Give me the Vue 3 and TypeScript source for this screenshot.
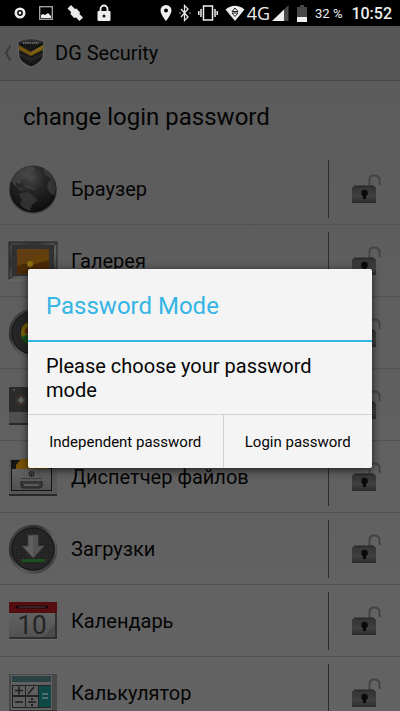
<script setup lang="ts">
import { ref } from 'vue'

type IconName = 'globe' | 'gallery' | 'chrome' | 'camera' | 'files' | 'download' | 'calendar' | 'calculator'

interface AppEntry {
  name: string
  icon: IconName
}

const apps: AppEntry[] = [
  { name: 'Браузер', icon: 'globe' },
  { name: 'Галерея', icon: 'gallery' },
  { name: '', icon: 'chrome' },
  { name: '', icon: 'camera' },
  { name: 'Диспетчер файлов', icon: 'files' },
  { name: 'Загрузки', icon: 'download' },
  { name: 'Календарь', icon: 'calendar' },
  { name: 'Калькулятор', icon: 'calculator' },
]

const mode = ref<'independent' | 'login' | null>(null)
</script>

<template>
  <div class="screen">
    <svg class="defs" width="0" height="0" aria-hidden="true">
      <defs>
        <radialGradient id="ball" cx=".45" cy=".25" r=".75">
          <stop offset="0" stop-color="#484848" /><stop offset=".4" stop-color="#262626" /><stop offset="1" stop-color="#0c0c0c" />
        </radialGradient>
        <linearGradient id="metal" x1="0" y1="0" x2="1" y2="1">
          <stop offset="0" stop-color="#4a4a4a" /><stop offset=".3" stop-color="#303030" /><stop offset=".6" stop-color="#606060" /><stop offset="1" stop-color="#303030" />
        </linearGradient>
        <linearGradient id="sunset" x1="0" y1="0" x2="0" y2="1">
          <stop offset="0" stop-color="#5c3d0c" /><stop offset=".65" stop-color="#6b420a" /><stop offset="1" stop-color="#442106" />
        </linearGradient>
        <linearGradient id="lockBody" x1="0" y1="0" x2="0" y2="1">
          <stop offset="0" stop-color="#343434" /><stop offset=".6" stop-color="#404040" /><stop offset="1" stop-color="#2c2c2c" />
        </linearGradient>
        <linearGradient id="sheet" x1="0" y1="0" x2="0" y2="1">
          <stop offset="0" stop-color="#626262" /><stop offset="1" stop-color="#525252" />
        </linearGradient>
        <pattern id="mesh" width="2" height="2" patternUnits="userSpaceOnUse">
          <rect width="2" height="2" fill="#282828" /><rect width="1" height="1" fill="#1c1c1c" />
        </pattern>
      </defs>
    </svg>

    <header class="status">
      <div class="group left">
        <svg width="12" height="14" viewBox="0 0 12 14"><circle cx="6" cy="7" r="4.2" fill="none" stroke="#eee" stroke-width="2.6" /><circle cx="6" cy="7" r="1.4" fill="#eee" /></svg>
        <svg width="14" height="14" viewBox="0 0 14 14"><rect x=".7" y=".7" width="12.6" height="12.6" fill="none" stroke="#aaa" stroke-width="1.3" /><path d="M2 12V9l2-1 2 1 3-2 3 3v2z" fill="#eee" /></svg>
        <svg width="18" height="18" viewBox="0 0 18 18" fill="#e8e8e8"><path d="M1.500 4.500L5 1l4 4 1.500-.5 3.500 4-.5 1.500 3.500 3.500-3.500 3.500-3.500-3.500-2 .5-3.500-4 .5-2z" /></svg>
        <svg width="14" height="18" viewBox="0 0 14 18"><path d="M3.500 8V5a3.500 3.500 0 0 1 7 0v3" fill="none" stroke="#eee" stroke-width="1.800" /><rect x=".5" y="7" width="13" height="10" rx="1" fill="#eee" /><circle cx="7" cy="12" r="1.500" fill="#111" /></svg>
      </div>
      <div class="group right">
        <svg width="12" height="18" viewBox="0 0 12 18"><path d="M6 1a5.500 5.500 0 0 0-5.500 5.500C.5 10.500 6 17 6 17s5.500-6.500 5.500-10.500A5.500 5.500 0 0 0 6 1zm0 3.500a2 2 0 1 1 0 4 2 2 0 0 1 0-4z" fill="#eee" /></svg>
        <svg width="12" height="18" viewBox="0 0 12 18" fill="none" stroke="#e4e4e4" stroke-width="1.300"><path d="M2 5l7 8-3.500 3.500v-15L9 5l-7 8" /><path d="M1 8.500v1M11 8.500v1" /></svg>
        <svg width="20" height="18" viewBox="0 0 20 18" fill="none" stroke="#eee" stroke-width="1.500"><rect x="5.500" y="2" width="9" height="14" /><path d="M3 5v8M.8 7v4M17 5v8M19.200 7v4" /></svg>
        <svg width="20" height="18" viewBox="0 0 20 18"><path d="M.5 5.500Q10-2 19.500 5.500L10 17z" fill="#eee" /><path d="M10 4l3 3.500H7zM7 9h6l-3 3.500z" fill="#eee" stroke="#222" stroke-width="1" /></svg>
        <span class="net">4G</span>
        <svg width="17" height="17" viewBox="0 0 17 17"><path d="M16.500 0v16H1z" fill="#4b4b4b" /><path d="M12 4.600V16H0z" fill="#eee" /></svg>
        <svg width="12" height="17" viewBox="0 0 12 17"><path d="M4 0h4v2h3v15H1V2h3z" fill="#484848" /><path d="M1 12h10v5H1z" fill="#eee" /></svg>
        <span class="percent">32 %</span>
        <time class="clock">10:52</time>
      </div>
    </header>

    <div class="content">
      <nav class="appbar">
        <a class="back" href="#" aria-label="Back">
          <svg width="9" height="18" viewBox="0 0 9 18"><path d="M7.500 1.500L3 9l4.500 7.500" fill="none" stroke="#3b3b3b" stroke-width="2" /></svg>
          <svg width="30" height="32" viewBox="0 0 30 32">
            <path d="M15 1l14 3-1 16q-2 7-13 11Q4 27 2 20L1 4z" fill="#626262" />
            <path d="M15 2.500l12.500 2.500-1 15q-2 6-11.500 9.500Q5.500 26 3.500 20L2.500 5z" fill="#171717" />
            <path d="M3 4.500Q15 0 27 4.500v2Q15 3 3 6.500z" fill="#303030" />
            <path d="M7 6h16" stroke="#686868" stroke-width="2" stroke-dasharray="1.500 .7" />
            <path d="M2.700 8L15 15l12.300-7-.4 5L15 19 3.200 13z" fill="#70540e" />
            <path d="M15 15l12.300-7-.4 3L15 17.500z" fill="#84661c" />
            <path d="M4 16l11 5 11-5v3l-11 6-11-6z" fill="#232323" />
          </svg>
        </a>
        <span class="app-title">DG Security</span>
      </nav>

      <h1 class="heading">change login password</h1>

      <ul class="apps">
        <li v-for="app in apps" :key="app.icon" class="row">
          <svg class="icon" width="50" height="50" viewBox="0 0 50 50" aria-hidden="true">
            <g v-if="app.icon === 'globe'">
              <ellipse cx="25" cy="27" rx="24" ry="23" fill="#484848" />
              <circle cx="25" cy="25" r="23.500" fill="url(#ball)" />
              <path d="M3 17Q9 4 23 2l5 3-5 4-4 5-5 1-2 5-4-1 1 4 5 1 2 3-5-2-5-4z" fill="#4c4c4c" opacity=".6" />
              <path d="M11 30l8-2 9 6 1 3-5 4-2 6q-7-2-10-7l2-4z" fill="#3c3c3c" opacity=".7" />
              <path d="M35 4l6 4 5 7 1 4-4-3-3-4-3-1zM40 18l5-3 3 7-1 9-4-1-4-6z" fill="#4c4c4c" opacity=".5" />
              <path d="M17 22l6 2 4 2" stroke="#484848" stroke-width="1" fill="none" />
            </g>
            <g v-else-if="app.icon === 'gallery'">
              <path d="M1 6h48v38H1z" fill="url(#metal)" />
              <path d="M1 6h48v38H1zM1 6l6 6M49 6l-6 6M1 44l6-6M49 44l-6-6" stroke="#222" fill="none" />
              <rect x="4" y="9" width="42" height="31" fill="#303030" />
              <rect x="9" y="13" width="32" height="25" fill="url(#sunset)" />
              <path d="M9 29l13-4 6-7q6-4 13-4V13H9z" fill="#603e12" />
              <path d="M9 30q8-4 15-1l17-5v14H9z" fill="#4a2a08" />
              <circle cx="22" cy="28" r="3" fill="#8a6c10" />
              <path d="M1 43h48v2H1z" fill="#666" />
            </g>
            <g v-else-if="app.icon === 'chrome' || app.icon === 'download'">
              <circle cx="25" cy="26" r="24" fill="#484848" />
              <circle cx="25" cy="25" r="23" fill="url(#mesh)" stroke="url(#metal)" stroke-width="2.500" />
              <circle cx="25" cy="25" r="21" fill="none" stroke="#181818" />
              <template v-if="app.icon === 'download'">
                <path d="M20 11h10v11h6L25 34 14 22h6z" fill="#606060" stroke="#3c3c3c" />
                <path d="M25 11h5v11h6L25 34z" fill="#535353" />
                <rect x="14" y="35" width="23" height="3" fill="#1c501c" />
              </template>
              <template v-else>
                <circle cx="25" cy="25" r="12" fill="#766208" />
                <path d="M25 25l-6-10.400q5-3 10-1z" fill="#5c1710" />
                <path d="M13.500 29l7-3 4 11q-9 0-11-8z" fill="#174d1c" />
                <path d="M17 21l4-3v9l-4-2z" fill="#5c2810" />
              </template>
            </g>
            <g v-else-if="app.icon === 'camera'">
              <rect x="1" y="7" width="48" height="37" fill="#505050" />
              <rect x="1" y="7" width="48" height="25" fill="#242424" />
              <path d="M1 7h18v25H1z" fill="#2b2b2b" />
              <circle cx="13" cy="20" r="5" fill="#303030" stroke="#4a2d20" />
              <circle cx="13" cy="20" r="2.500" fill="#6c6c6c" />
              <path d="M13 16v8M9 20h8" stroke="#5a5a5a" />
              <circle cx="6" cy="10" r="1" fill="#5a5a5a" />
              <path d="M1 43h48v2H1z" fill="#2a2a2a" />
            </g>
            <g v-else-if="app.icon === 'files'">
              <path d="M1 7h48v37H1z" fill="#575757" />
              <path d="M3 8h41v31H3z" fill="#151515" />
              <path d="M8 17v-4l5-6h28v10z" fill="#765306" />
              <path d="M4 17h39v21H4z" fill="url(#sheet)" />
              <circle cx="23.500" cy="22" r="2.500" fill="#4a4a4a" stroke="#202020" />
              <path d="M23.500 21v3" stroke="#222" />
              <path d="M13 27h21v7q0 2-2 2H15q-2 0-2-2z" fill="#373737" stroke="#222" />
              <path d="M12 27h23v2H12zM16 32h15v2H16z" fill="#5a5a5a" />
              <path d="M1 42h48v2H1z" fill="#282828" />
            </g>
            <g v-else-if="app.icon === 'calendar'">
              <rect x="1" y="6" width="48" height="38" fill="#303030" />
              <rect x="1" y="17" width="46" height="24" fill="url(#sheet)" />
              <path d="M47 28v13H36z" fill="#4c4c4c" />
              <rect x="1" y="6" width="48" height="11" fill="#560d10" />
              <path d="M9 11h30" stroke="#220709" stroke-width="3" stroke-linecap="round" />
              <path d="M11 11h26" stroke="#4d3a3a" />
              <text x="24" y="38" text-anchor="middle" class="day">10</text>
              <path d="M1 43h48v1H1z" fill="#6c6c6c" />
            </g>
            <g v-else>
              <rect x="1" y="6" width="48" height="40" fill="#484848" />
              <path d="M3 7h41v36H3z" fill="#606060" />
              <rect x="4" y="8" width="39" height="6" fill="#2a4243" />
              <path d="M4 17h39v23H4z" fill="#222" />
              <path d="M5 18h12v9H5zM18 18h12v9H18zM5 29h12v10H5zM18 29h12v10H18z" fill="#5e5e5e" />
              <rect x="31" y="18" width="12" height="21" fill="#0e4948" />
              <path d="M7 22.500h8M11 18.500v8M20 26l6-7M7 34h8M20 34h8" stroke="#1d1d1d" stroke-width="1.500" />
              <path d="M34 26h6M34 30h6" stroke="#6c7b7b" stroke-width="1.500" />
              <path d="M23 30h2v2h-2zM23 36h2v2h-2z" fill="#1d1d1d" />
              <path d="M1 42h48v3H1z" fill="#333" />
            </g>
          </svg>
          <span class="name">{{ app.name }}</span>
          <span class="lock-cell">
            <svg width="30" height="30" viewBox="0 0 30 30" aria-hidden="true">
              <path d="M17.500 12V5.500Q17.500 1.500 22.500 1.500T27.500 6v5" fill="none" stroke="#444" stroke-width="2" />
              <path d="M2 11.500h20l1 3H1z" fill="#292929" />
              <rect x="0" y="13" width="24" height="16" rx="1" fill="url(#lockBody)" />
              <path d="M0 28.500h24" stroke="#2c2c2c" />
              <circle cx="12.500" cy="19" r="3.300" fill="#0a0a0a" /><path d="M11.300 20h2.400l.5 5h-3.400z" fill="#0a0a0a" />
            </svg>
          </span>
        </li>
      </ul>

      <div class="overlay">
        <section class="dialog" role="dialog" aria-labelledby="dialog-title">
          <h2 id="dialog-title" class="dialog-title">Password Mode</h2>
          <p class="message">Please choose your password mode</p>
          <div class="actions">
            <button type="button" @click="mode = 'independent'">Independent password</button>
            <button type="button" @click="mode = 'login'">Login password</button>
          </div>
        </section>
      </div>
    </div>
  </div>
</template>

<style>
body {
  background: #5f5f5f;
}
</style>

<style scoped>
.screen {
  display: flex;
  flex-direction: column;
  height: 100vh;
  overflow: hidden;
  font-family: Roboto, "Noto Sans", sans-serif;
  color: #050505;
  background: linear-gradient(#5b5b5b, #636363);
}
.defs {
  position: absolute;
}
.status {
  flex: none;
  display: flex;
  justify-content: space-between;
  height: 26px;
  padding: 0 8px 0 14px;
  background: #000;
  color: #eee;
}
.group {
  display: flex;
  align-items: center;
  white-space: nowrap;
}
.left {
  gap: 13px;
}
.right {
  gap: 7px;
}
.net {
  font: 18px "Open Sans", sans-serif;
  margin: 0 -5px;
}
.percent {
  font-size: 13px;
  margin-right: 2px;
}
.clock {
  font-size: 16px;
  font-weight: 500;
}
.content {
  position: relative;
  flex: 1;
  min-height: 0;
  overflow: hidden;
}
.appbar {
  display: flex;
  align-items: center;
  gap: 9px;
  height: 55px;
  box-sizing: border-box;
  padding-left: 3px;
  background: #565656;
  border-bottom: 1px solid #484848;
}
.back {
  display: flex;
  align-items: center;
  gap: 4px;
}
.app-title {
  font-size: 20px;
}
.heading {
  margin: 0;
  padding: 0 23px;
  font-size: 24px;
  font-weight: 400;
  line-height: 72px;
}
.apps {
  list-style: none;
  margin: 0;
  padding: 0;
}
.row {
  display: flex;
  align-items: center;
  height: 72px;
  box-sizing: border-box;
  padding-left: 8px;
  border-bottom: 1px solid #525252;
}
.icon {
  flex: none;
}
.name {
  flex: 1;
  padding-left: 13px;
  font-size: 20px;
}
.lock-cell {
  display: flex;
  align-items: center;
  height: 58px;
  box-sizing: border-box;
  width: 72px;
  padding-left: 23px;
  border-left: 1px solid #2c2c2c;
}
.day {
  font: 26px Roboto, sans-serif;
  fill: #242424;
}
.overlay {
  position: absolute;
  inset: 0;
  display: flex;
  align-items: center;
  padding: 0 28px;
}
.dialog {
  flex: 1;
  background: #f4f4f4;
  border-radius: 2px;
  box-shadow: 0 2px 8px rgba(0, 0, 0, 0.7);
}
.dialog-title {
  margin: 0;
  padding: 3px 18px 0;
  font-size: 24px;
  font-weight: 400;
  line-height: 68px;
  color: #33b5e5;
  border-bottom: 2px solid #33b5e5;
}
.message {
  margin: 0;
  padding: 12px 18px;
  font-size: 20px;
  line-height: 24px;
}
.actions {
  display: flex;
  border-top: 1px solid #d2d2d2;
}
.actions button {
  flex: 1 1 auto;
  height: 53px;
  padding: 0;
  border: 0;
  background: none;
  color: #050505;
  font: 15px Roboto, sans-serif;
  white-space: nowrap;
}
.actions button + button {
  border-left: 1px solid #d2d2d2;
}
</style>
